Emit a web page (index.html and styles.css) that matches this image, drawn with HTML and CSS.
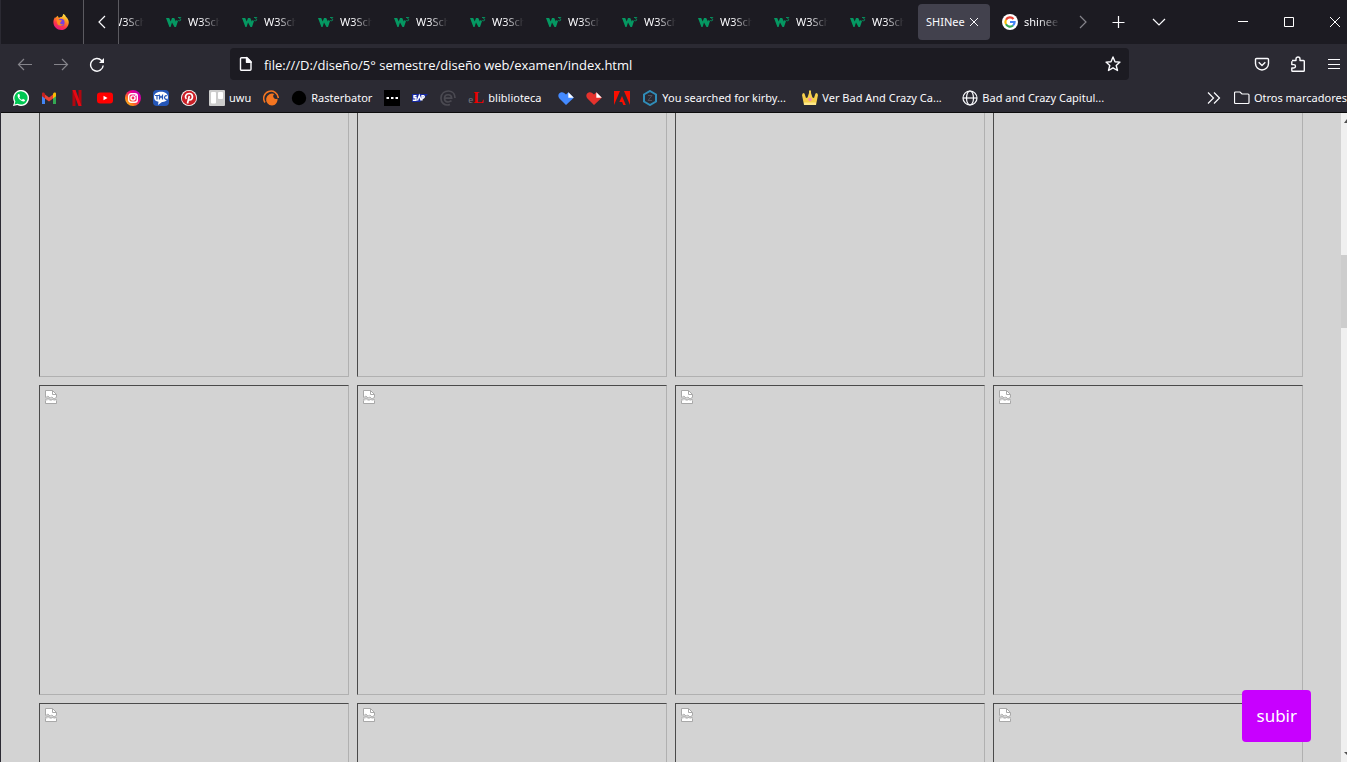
FILE: index.html
```html
<!DOCTYPE html>
<html lang="es">
<head>
<meta charset="utf-8">
<title>SHINee</title>
<link rel="stylesheet" href="styles.css">
</head>
<body>
<svg class="defs" aria-hidden="true">
  <defs>
    <linearGradient id="ff" x1=".8" y1="0" x2=".3" y2="1"><stop offset="0" stop-color="#fff44f"/><stop offset=".35" stop-color="#ff9a1f"/><stop offset=".7" stop-color="#ff3647"/><stop offset="1" stop-color="#e31587"/></linearGradient>
    <linearGradient id="ig" x1="0" y1="1" x2="1" y2="0"><stop offset="0" stop-color="#ffd521"/><stop offset=".3" stop-color="#ff7a1a"/><stop offset=".6" stop-color="#f50083"/><stop offset="1" stop-color="#a000d8"/></linearGradient>
  </defs>
  <symbol id="w3" viewBox="0 0 16 16"><path d="M0 4h3.200l1.500 3.500L6 4h2.200l1.700 3.500L10.500 6l1.500 1-2 6H8.500L6 8.500 4.600 13H3.400z" fill="#059862"/><path d="M12 3.500h2.800l-1.200 1.300c1.700.2 1.200 2.200-.2 2-.6 0-1-.2-1.300-.6" fill="none" stroke="#059862" stroke-width=".9"/></symbol>
  <symbol id="broken" viewBox="0 0 14 14"><path d="M1.500.5h7l4 4v2l-2 2-2-1-2 1-2-2-3 1z" fill="#fff"/><path d="M1.500 7V.5h7l4 4V7M8.500.5v4h4" fill="none" stroke="#a8a8a8"/><path d="M1.500 11l3-1 2 1 2-1 2 1 2-1v3h-11z" fill="#fff"/><path d="M1.500 10.500v3h11v-3" fill="none" stroke="#a8a8a8"/><path d="M1 8l3-2 2 2 2-1 2 2 3-2M1 10l3-2 3 2 3-1 3 1" fill="none" stroke="#b4b4b4"/></symbol>
  <symbol id="heart" viewBox="0 0 16 16"><path d="M8 15L1.200 8.200C-.6 6 .5 2.600 3.400 2.200 5.300 2 6.800 3 8 4.500L10.300 2.200 15.800 7.800z"/><path d="M10.300 2.200L15.800 7.800H10.300z" fill="#fff"/></symbol>
</svg>

<header class="chrome">
  <div class="tabbar">
    <button class="ff-btn" aria-label="Firefox View"><svg class="ico" viewBox="0 0 16 16"><path d="M14.900 5.200C14.500 4.200 13.600 3 12.900 2.700c-.3-1.300-1.700-2.400-2.700-2.700-.3 1.200-.5 2.200-1.500 3-1.300 0-2 .3-2.600.8C5.300 3.500 5 2.500 5 1.700 3.800 2.300 3 3.200 2.500 4l-.3-.9C.8 4.700.3 6.700.4 8.500.6 12.700 4 16 8.200 16c4.300 0 7.600-3.500 7.600-7.800 0-1.100-.3-2.100-.9-3z" fill="url(#ff)"/><circle cx="8" cy="8.400" r="3.600" fill="#7a3fe0"/><path d="M3.500 5.500c1.500-1 2.500-.3 3 .5L9 6.500c-.3 1-1.500 1-1.700 2-.7 2 2.200 2.300 3.200 1.600-1 2.500-5.500 2.200-6.300-.5z" fill="#ff8a1c"/></svg></button>
    <button class="scroll-btn" aria-label="Pestañas anteriores"><svg class="ico line" viewBox="0 0 16 16"><path d="M11 2L5 8l6 6"/></svg></button>
    <nav class="tabs" aria-label="Pestañas">
      <div class="strip">
      <button class="tab"><svg class="ico"><use href="#w3"/></svg><span>W3Schools</span></button>
      <button class="tab"><svg class="ico"><use href="#w3"/></svg><span>W3Schools</span></button>
      <button class="tab"><svg class="ico"><use href="#w3"/></svg><span>W3Schools</span></button>
      <button class="tab"><svg class="ico"><use href="#w3"/></svg><span>W3Schools</span></button>
      <button class="tab"><svg class="ico"><use href="#w3"/></svg><span>W3Schools</span></button>
      <button class="tab"><svg class="ico"><use href="#w3"/></svg><span>W3Schools</span></button>
      <button class="tab"><svg class="ico"><use href="#w3"/></svg><span>W3Schools</span></button>
      <button class="tab"><svg class="ico"><use href="#w3"/></svg><span>W3Schools</span></button>
      <button class="tab"><svg class="ico"><use href="#w3"/></svg><span>W3Schools</span></button>
      <button class="tab"><svg class="ico"><use href="#w3"/></svg><span>W3Schools</span></button>
      <button class="tab"><svg class="ico"><use href="#w3"/></svg><span>W3Schools</span></button>
      <div class="tab active"><span>SHINee</span><button class="close" aria-label="Cerrar pestaña"><svg viewBox="0 0 10 10"><path d="M1 1l8 8M9 1L1 9"/></svg></button></div>
      <button class="tab"><svg class="ico" viewBox="0 0 16 16"><circle cx="8" cy="8" r="8" fill="#fff"/><g fill="none" stroke-width="2.200"><path d="M4 5.700A4.600 4.600 0 0 1 11.500 5" stroke="#ea4335"/><path d="M4 5.700a4.600 4.600 0 0 0 0 4.600" stroke="#fbbc05"/><path d="M4 10.300a4.600 4.600 0 0 0 7 1.200" stroke="#34a853"/><path d="M8 8h4.600a4.600 4.600 0 0 1-1.600 3.500" stroke="#4285f4"/></g></svg><span class="wide">shinee</span></button>
      </div>
    </nav>
    <button class="tool dim" aria-label="Pestañas siguientes"><svg class="ico line" viewBox="0 0 16 16"><path d="M5 2l6 6-6 6"/></svg></button>
    <button class="tool" aria-label="Nueva pestaña"><svg class="ico line" viewBox="0 0 16 16"><path d="M7.500 2v12M1.500 8.500h12"/></svg></button>
    <button class="tool wide-tool" aria-label="Listar pestañas"><svg class="ico line" viewBox="0 0 16 16"><path d="M2 5l6 6 6-6"/></svg></button>
    <div class="window">
      <button class="win" aria-label="Minimizar"><svg viewBox="0 0 10 10"><path d="M0 4.500h10"/></svg></button>
      <button class="win" aria-label="Maximizar"><svg viewBox="0 0 10 10"><path d="M.5.500h9v9h-9z"/></svg></button>
      <button class="win" aria-label="Cerrar"><svg viewBox="0 0 10 10"><path d="M0 0l10 10M10 0L0 10"/></svg></button>
    </div>
  </div>

  <div class="navbar">
    <div class="history">
      <button class="dim" aria-label="Atrás"><svg class="ico line" viewBox="0 0 16 16"><path d="M15 8.500H1.500M7 3L1.500 8.500 7 14"/></svg></button>
      <button class="dim" aria-label="Adelante"><svg class="ico line" viewBox="0 0 16 16"><path d="M1 8.500h13.500M9 3l5.500 5.500L9 14"/></svg></button>
      <button aria-label="Recargar"><svg class="ico line bold" viewBox="0 0 16 16"><path d="M14.200 9.500A6.300 6.300 0 1 1 12.500 4.500L14 6"/><path d="M15 2v5h-5z" fill="currentColor" stroke="none"/></svg></button>
    </div>
    <div class="urlbar">
      <svg class="ico line bold" viewBox="0 0 16 16"><path d="M3.500 1.700h5.500l4 4v7.600a1 1 0 0 1-1 1h-8.500a1 1 0 0 1-1-1V2.700a1 1 0 0 1 1-1z"/><path d="M8.500 1.500v4.700h4.700z" fill="currentColor"/></svg>
      <input type="text" aria-label="Dirección" value="file:///D:/diseño/5° semestre/diseño web/examen/index.html">
      <button aria-label="Añadir a marcadores"><svg class="ico line bold" viewBox="0 0 16 16"><path d="M8 1l2 4.700 5 .4-3.800 3.400 1.300 5L8 11.800l-4.500 2.700 1.300-5L1 6.100l5-.4z"/></svg></button>
    </div>
    <div class="actions">
      <button aria-label="Pocket"><svg class="ico line bold" viewBox="0 0 16 16"><path d="M2.500 2.500h11a1 1 0 0 1 1 1V7.500a6.500 6.500 0 0 1-13 0V3.500a1 1 0 0 1 1-1z"/><path d="M4.700 6.300L8 9.500l3.300-3.200"/></svg></button>
      <button aria-label="Extensiones"><svg class="ico line bold" viewBox="0 0 16 16"><path d="M2 4.500h4V3a2 2 0 0 1 4 0v1.500h3.500a.8.800 0 0 1 .8.800V14.500a.8.800 0 0 1-.8.800H2.600a.8.800 0 0 1-.8-.8V12h2a1.600 1.600 0 0 0 0-3.400h-2V5.300"/></svg></button>
      <button aria-label="Menú"><svg class="ico line" viewBox="0 0 16 16"><path d="M2 3.500h12M2 8.500h12M2 12.500h12"/></svg></button>
    </div>
  </div>

  <nav class="bookmarks" aria-label="Marcadores">
    <a href="#" aria-label="WhatsApp"><svg class="ico" viewBox="0 0 16 16"><path d="M0 16l1.200-4A8 8 0 1 1 4.300 15z" fill="#fff"/><path d="M1.500 14.500l.9-3A6.600 6.600 0 1 1 4.700 13.700z" fill="#00c853"/><path d="M5.500 4c-2 1.500-.3 4.200 1.500 5.800 2 1.800 4.700 2.700 5 .2L10 8.800l-1 1C7.700 9.400 6.700 8.200 6.300 7.200l.8-1L6.300 4z" fill="#fff"/></svg></a>
    <a href="#" aria-label="Gmail"><svg class="ico" viewBox="0 0 16 16"><path d="M1 4v10h3V7.500z" fill="#4285f4"/><path d="M15 4v10h-3V7.500z" fill="#34a853"/><path d="M4 4.500l4 3 4-3v4L8 11.500l-4-3z" fill="#ea4335"/><path d="M1 6.300V4c0-1.800 2-2 3 0v4.500z" fill="#c5221f"/><path d="M15 6.300V4c0-1.800-2-2-3 0v4.500z" fill="#fbbc04"/></svg></a>
    <a href="#" aria-label="Netflix"><svg class="ico" viewBox="0 0 16 16"><path d="M3.500 0h3v16l-3 .2zM9.500 0h3v16l-3-.5z" fill="#b1060f"/><path d="M3.500 0h3l6 16h-3z" fill="#e50914"/></svg></a>
    <a href="#" aria-label="YouTube"><svg class="ico" viewBox="0 0 16 16"><rect y="2.500" width="16" height="11" rx="3" fill="#f00"/><path d="M6.500 5.700v4.600l4-2.300z" fill="#fff"/></svg></a>
    <a href="#" aria-label="Instagram"><svg class="ico" viewBox="0 0 16 16"><circle cx="8" cy="8" r="8" fill="url(#ig)"/><g fill="none" stroke="#fff" stroke-width="1.400"><rect x="3.700" y="3.700" width="8.600" height="8.600" rx="2.500"/><circle cx="8" cy="8" r="2.100"/></g><circle cx="10.700" cy="5.300" r=".7" fill="#fff"/></svg></a>
    <a href="#" aria-label="TMO"><svg class="ico" viewBox="0 0 16 16"><rect width="16" height="16" rx="4" fill="#2456b8"/><path d="M1 7c0-7 14-7 14 0 0 4-4 5-6 5l-4 3 .5-3.300C3 11.500 1 10 1 7z" fill="#fff"/><path d="M2 5.500h4M4 5.500v4M6.500 9.500v-4l1.500 2 1.500-2v4M14 6a1.600 1.800 0 1 0 0 3" fill="none" stroke="#2456b8" stroke-width="1.200"/></svg></a>
    <a href="#" aria-label="Pinterest"><svg class="ico" viewBox="0 0 16 16"><circle cx="8" cy="8" r="8" fill="#fff"/><circle cx="8" cy="8" r="7.200" fill="#cb2027"/><path d="M5.300 9C3.300 6.800 5 3.500 8.300 3.500c4.200 0 4 6.500.5 6.500-.8 0-1.200-.3-1.500-.8M8.300 6L6.500 13.500" fill="none" stroke="#fff" stroke-width="1.700"/></svg></a>
    <a href="#"><svg class="ico" viewBox="0 0 16 16"><rect width="16" height="16" rx="1" fill="#ccc"/><rect x="2" y="2" width="5" height="11.500" rx="1" fill="#fff"/><rect x="9" y="2" width="5" height="7" rx="1" fill="#fff"/></svg><span>uwu</span></a>
    <a href="#" aria-label="Crunchyroll"><svg class="ico" viewBox="0 0 16 16"><path d="M2 12.500A7.300 7.300 0 1 1 15.300 8" fill="none" stroke="#f47521" stroke-width="1.500"/><path d="M9 15.500A6 6 0 1 1 11.500 4a2.600 2.600 0 1 0 3 4.500c.5 3.500-2 7-5.500 7z" fill="#f47521"/></svg></a>
    <a href="#"><svg class="ico" viewBox="0 0 16 16"><circle cx="8" cy="8" r="7.200"/></svg><span>Rasterbator</span></a>
    <a href="#" aria-label="Puntos"><svg class="ico" viewBox="0 0 16 16"><path d="M0 0h16v16H0z"/><path d="M2.500 7h2.500v2H2.500zM7 7h2.500v2H7zM11.500 7H14v2h-2.500z" fill="#fff"/></svg></a>
    <a href="#" aria-label="SAP"><svg class="ico" viewBox="0 0 16 16"><path d="M0 4h16l-8 8H0z" fill="#1528a0"/><path d="M4.500 5.800H2v2h2v2.400H.8M5.500 10.500L7.300 5.500l1.900 5M10 10.500V5.700h1.500q1.500 1 0 2.300H10" fill="none" stroke="#fff" stroke-width="1.400"/></svg></a>
    <a href="#" aria-label="Correo"><svg class="ico" viewBox="0 0 16 16"><path d="M4.500 8.200h7.200C11.500 3.500 4.500 3.700 4.500 8.200s4.500 4.500 7 2.500M10 14.500C4 16.500.8 12 1 8 1.300 3 5 1 8.500 1c5 0 6.500 4 6.500 7" fill="none" stroke="#4b4a52" stroke-width="1.700"/></svg></a>
    <a href="#"><span class="ico el" aria-hidden="true">e<b>L</b></span><span class="library">bliblioteca</span></a>
    <a href="#" aria-label="Azul"><svg class="ico" fill="#448aff"><use href="#heart"/></svg></a>
    <a href="#" aria-label="Rojo"><svg class="ico" fill="#e5322d"><use href="#heart"/></svg></a>
    <a href="#" aria-label="Adobe"><svg class="ico" viewBox="0 0 16 16"><path d="M0 1h6L0 15zM16 1h-6l6 14zM8 6l3.800 9H9.300l-1.200-3H5.300z" fill="#fa0f00"/></svg></a>
    <a href="#"><svg class="ico" viewBox="0 0 16 16"><path d="M8 1l6 3.500v7L8 15l-6-3.500v-7z" fill="none" stroke="#308cb8" stroke-width="2"/><path d="M6 5.500h4l-4 5h4" fill="none" stroke="#50505b"/></svg><span class="long">You searched for kirby...</span></a>
    <a href="#"><svg class="ico" viewBox="0 0 16 16"><path d="M2 15L0 5l1-2 1.500.5L4 8l1.500-.5L7 3V.5h2V3l1.500 4.500L12 8l1.500-4.500L15 3l1 2-2 10z" fill="#f6cf4b"/><path d="M2 12.500h12V15H2z" fill="#ffe88a"/><circle cx="8" cy="9.500" r="1.700" fill="#f58baa"/></svg><span class="long">Ver Bad And Crazy Ca...</span></a>
    <a href="#"><svg class="ico line" viewBox="0 0 16 16"><circle cx="8" cy="8" r="7"/><ellipse cx="8" cy="8" rx="3.500" ry="7"/><path d="M1 8h14"/></svg><span class="long">Bad and Crazy Capitul...</span></a>
    <button class="more" aria-label="Más marcadores"><svg class="ico line" viewBox="0 0 16 16"><path d="M2 2.500L7.500 8 2 13.500M8 2.500L13.500 8 8 13.500"/></svg></button>
    <a href="#"><svg class="ico line" viewBox="0 0 16 16"><path d="M1.500 2h4.500l2 2h6a1 1 0 0 1 1 1v7.500a1 1 0 0 1-1 1H1.500a1 1 0 0 1-1-1V3a1 1 0 0 1 1-1z"/></svg><span>Otros marcadores</span></a>
  </nav>
</header>

<main class="page">
  <div class="gallery">
    <div class="photo"></div><div class="photo"></div><div class="photo"></div><div class="photo"></div>
    <div class="photo"><svg><use href="#broken"/></svg></div>
    <div class="photo"><svg><use href="#broken"/></svg></div>
    <div class="photo"><svg><use href="#broken"/></svg></div>
    <div class="photo"><svg><use href="#broken"/></svg></div>
    <div class="photo"><svg><use href="#broken"/></svg></div>
    <div class="photo"><svg><use href="#broken"/></svg></div>
    <div class="photo"><svg><use href="#broken"/></svg></div>
    <div class="photo"><svg><use href="#broken"/></svg></div>
  </div>
  <div class="scrollbar"><svg viewBox="0 0 6 5"><path d="M3 4l3-4v4z"/></svg><div class="thumb"></div><svg class="down" viewBox="0 0 6 5"><path d="M3 1h3v3z"/></svg></div>
  <a class="subir" href="#">subir</a>
</main>
</body>
</html>
```
FILE: styles.css
```css
* { box-sizing: border-box; }

body {
  margin: 0;
  height: 100vh;
  display: flex;
  flex-direction: column;
  overflow: hidden;
  border-left: 1px solid #2b2a33;
  background: #d3d3d3;
  color: #fbfbfe;
  font: 11px/18px "Noto Sans", "Open Sans", sans-serif;
}

.defs { position: absolute; width: 0; height: 0; }

button {
  display: flex;
  align-items: center;
  justify-content: center;
  flex: none;
  padding: 0;
  border: 0;
  background: none;
  color: inherit;
  font: inherit;
}

a { color: inherit; text-decoration: none; }

.ico { width: 16px; height: 16px; flex: none; }
.line { fill: none; stroke: currentColor; stroke-width: 1.2; }
.bold { stroke-width: 1.4; stroke-linejoin: round; }
.dim { color: #85848b; }

.chrome {
  flex: none;
  background: #2b2a33;
  border-bottom: 1px solid #0c0c0d;
}

/* Tabs */
.tabbar { display: flex; height: 44px; background: #1c1b22; }
.ff-btn { width: 83px; padding-left: 37px; border-right: 1px solid #5b5a60; }
.scroll-btn { width: 35px; padding-left: 2px; border-right: 1px solid #5b5a60; }
.tabs { flex: 0 1 948px; overflow: hidden; }
.strip { display: flex; height: 44px; margin-left: -37px; align-items: center; }

.tab {
  display: flex;
  justify-content: flex-start;
  align-items: center;
  flex: none;
  gap: 6px;
  width: 76px;
  height: 36px;
  padding-left: 8px;
}

.tab > span {
  width: 32px;
  overflow: hidden;
  white-space: nowrap;
  text-align: left;
  -webkit-mask-image: linear-gradient(90deg, #000 40%, transparent);
  mask-image: linear-gradient(90deg, #000 40%, transparent);
}

.tab > .wide { width: 36px; }

.active {
  width: 72px;
  margin-right: 4px;
  gap: 4px;
  border-radius: 4px;
  background: #42414d;
}

.active > span { width: auto; -webkit-mask-image: none; mask-image: none; }
.close svg { width: 10px; height: 10px; stroke: currentColor; }
.tool { width: 32px; margin-right: 4px; }
.wide-tool { width: 40px; }
.window { display: flex; margin-left: auto; margin-right: -8px; }
.win { width: 46px; }
.win:last-child { width: 43px; padding-left: 18px; justify-content: flex-start; }
.win svg { width: 10px; height: 10px; fill: none; stroke: #fff; stroke-width: 1; }

/* Address row */
.navbar { display: flex; align-items: center; height: 40px; }
.history { display: flex; flex: none; gap: 20px; width: 229px; padding-left: 16px; }

.urlbar {
  display: flex;
  align-items: center;
  flex: 1;
  gap: 10px;
  height: 32px;
  padding: 0 8px;
  border-radius: 4px;
  background: #1c1b22;
}

.urlbar input {
  flex: 1;
  min-width: 0;
  padding: 2px 0 0;
  border: 0;
  outline: 0;
  background: none;
  color: inherit;
  font: 13px/20px "Open Sans", "Noto Sans", sans-serif;
}

.actions { display: flex; flex: none; justify-content: flex-end; gap: 20px; width: 218px; padding-right: 5px; }

/* Bookmarks */
.bookmarks { display: flex; align-items: center; gap: 12px; height: 28px; padding-left: 12px; white-space: nowrap; }
.bookmarks a { display: flex; align-items: center; flex: none; gap: 4px; }
.library { width: 58px; }
.long { width: 128px; }
.more { margin-left: auto; }

.el { color: #77767d; font: 11px/16px "Liberation Serif", serif; }
.el b { color: #e00; font-size: 16px; }

/* Page */
.page { position: relative; display: flex; flex: 1; min-height: 0; overflow: hidden; }

.gallery {
  display: grid;
  grid-template-columns: repeat(4, 1fr);
  align-content: start;
  gap: 8px;
  flex: 1;
  margin-top: -46px;
  padding: 0 38px;
}

.photo {
  aspect-ratio: 1;
  padding: 4px;
  border: 1px solid;
  border-color: #4a4a4a #b0b0b0 #b0b0b0 #4a4a4a;
}

.photo svg { display: block; width: 14px; height: 14px; }

.scrollbar {
  display: flex;
  flex-direction: column;
  align-items: flex-end;
  flex: none;
  width: 6px;
  padding: 6px 0;
  background: #f0f0f0;
}

.scrollbar svg { width: 6px; height: 5px; fill: #505050; }
.scrollbar .down { margin-top: auto; }
.thumb { width: 6px; height: 73px; margin-top: 131px; background: #cdcdcd; }

.subir {
  position: absolute;
  right: 36px;
  bottom: 20px;
  padding: 14px;
  border-radius: 4px;
  background: #c800ff;
  color: #fff;
  font-size: 17px;
  line-height: 24px;
}
```
